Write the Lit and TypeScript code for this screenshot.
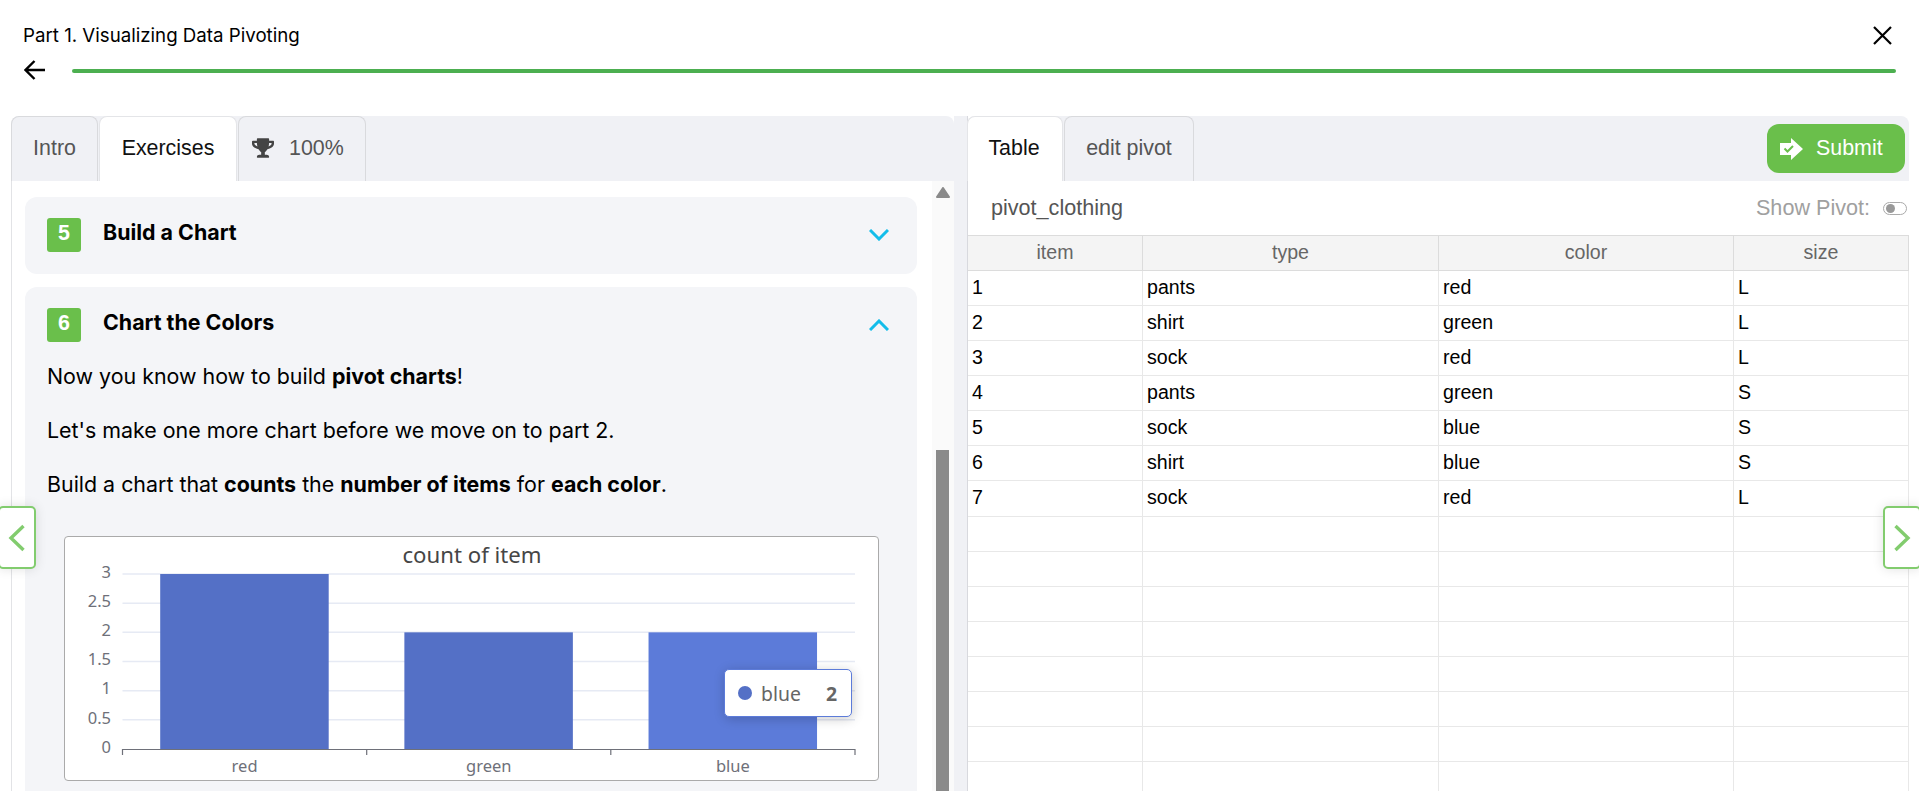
import { LitElement, css, html, svg } from 'lit'
import { customElement } from 'lit/decorators.js'

const rows = [
  ['1', 'pants', 'red', 'L'],
  ['2', 'shirt', 'green', 'L'],
  ['3', 'sock', 'red', 'L'],
  ['4', 'pants', 'green', 'S'],
  ['5', 'sock', 'blue', 'S'],
  ['6', 'shirt', 'blue', 'S'],
  ['7', 'sock', 'red', 'L'],
  ['', '', '', ''],
  ['', '', '', ''],
  ['', '', '', ''],
  ['', '', '', ''],
  ['', '', '', ''],
  ['', '', '', ''],
  ['', '', '', ''],
  ['', '', '', ''],
]

const bars = [
  { name: 'red', value: 3, color: '#5470c6' },
  { name: 'green', value: 2, color: '#5470c6' },
  { name: 'blue', value: 2, color: '#5c7bd9' },
]

const ticks = ['0', '0.5', '1', '1.5', '2', '2.5', '3']

@customElement('app-root')
export class AppRoot extends LitElement {
  static styles = css`
    :host {
      display: block;
      height: 791px;
      overflow: hidden;
      background: #fff;
      color: #000;
      font-family: 'Liberation Sans', Arial, sans-serif;
    }
    .page {
      position: relative;
      height: 791px;
      overflow: hidden;
    }
    .header {
      height: 116px;
      box-sizing: border-box;
      padding: 20px 23px 0 23px;
    }
    .title-row {
      display: flex;
      justify-content: space-between;
      align-items: center;
      height: 30px;
      font-family: Inter, sans-serif;
      font-size: 18.7px;
    }
    .close {
      width: 19px;
      height: 19px;
      margin-right: 4px;
    }
    .progress-row {
      display: flex;
      align-items: center;
      height: 40px;
    }
    .back {
      width: 21px;
      height: 20px;
      margin: 0 27px 0 1px;
    }
    .progress {
      flex: 1;
      height: 4px;
      margin-top: 2px;
      border-radius: 2px;
      background: #4caf50;
    }
    .panels {
      display: flex;
      height: 675px;
      padding: 0 10px 0 11px;
    }
    .left {
      flex: 0 0 943px;
      display: flex;
      flex-direction: column;
    }
    .splitter {
      flex: 0 0 13px;
      background: #f0f1f5;
    }
    .right {
      flex: 1;
      display: flex;
      flex-direction: column;
      min-width: 0;
      border-left: 1px solid #d8d9de;
    }
    .right .tabs {
      margin-left: -1px;
    }
    .tabs {
      flex: 0 0 65px;
      display: flex;
      gap: 1px;
      align-items: stretch;
      background: #f0f1f5;
      border-radius: 8px 8px 0 0;
    }
    .tab {
      display: flex;
      align-items: center;
      justify-content: center;
      gap: 15px;
      box-sizing: border-box;
      padding-bottom: 2px;
      border: 1px solid #d9dadd;
      border-bottom: none;
      border-radius: 8px 8px 0 0;
      color: #555;
      font-size: 21.4px;
    }
    .tab.active {
      background: #fff;
      color: #111;
      border-color: #e4e5e8;
    }
    .tab svg {
      width: 22px;
      height: 20px;
    }
    .intro { width: 87px; }
    .exercises { width: 138px; }
    .score {
      width: 128px;
      justify-content: flex-start;
      padding-left: 13px;
    }
    .table-tab {
      width: 96px;
      padding-right: 2px;
    }
    .pivot-tab { width: 130px; }
    .submit {
      display: flex;
      align-items: center;
      gap: 13px;
      box-sizing: border-box;
      width: 138px;
      height: 49px;
      margin: 8px 4px 0 auto;
      padding-left: 13px;
      border-radius: 12px;
      background: #6abf4b;
      color: #fff;
      font-size: 21.4px;
    }
    .submit svg {
      width: 23px;
      height: 22px;
    }
    .scroll-wrap {
      flex: 1;
      display: flex;
      min-height: 0;
    }
    .content {
      flex: 1;
      min-width: 0;
      box-sizing: border-box;
      padding: 16px 15px 0 13px;
      border-left: 1px solid #e2e3e6;
      overflow: hidden;
    }
    .scrollbar {
      flex: 0 0 22px;
      display: flex;
      flex-direction: column;
      box-sizing: border-box;
      padding: 6px 0 0 4px;
      background: #fafafa;
    }
    .scrollbar svg {
      width: 14px;
      height: 11px;
    }
    .thumb {
      flex: 1;
      width: 13px;
      margin-top: 252px;
      background: #8a8a8a;
    }
    .card {
      box-sizing: border-box;
      margin-bottom: 13px;
      padding: 21px 28px 40px 22px;
      border-radius: 12px;
      background: #f4f5f8;
      font-family: Inter, sans-serif;
    }
    .card.closed {
      height: 77px;
      padding-bottom: 0;
    }
    .card-head {
      display: flex;
      align-items: center;
      height: 34px;
    }
    .badge {
      display: flex;
      align-items: center;
      justify-content: center;
      width: 34px;
      height: 34px;
      margin-right: 22px;
      padding-bottom: 4px;
      box-sizing: border-box;
      border-radius: 3px;
      background: #6abf4b;
      color: #fff;
      font-family: 'Liberation Sans', Arial, sans-serif;
      font-size: 21.4px;
      font-weight: 700;
    }
    .card-title {
      flex: 1;
      padding-bottom: 6px;
      font-size: 21.4px;
      font-weight: 700;
    }
    .chev {
      width: 20px;
      height: 12px;
    }
    .card p {
      margin: 0 0 24px;
      font-size: 21.4px;
      line-height: 30px;
    }
    .card p:first-of-type {
      margin-top: 19px;
    }
    .chart {
      position: relative;
      box-sizing: border-box;
      width: 815px;
      height: 245px;
      margin: 37px 0 0 17px;
      border: 1px solid #aaa;
      border-radius: 4px;
      background: #fff;
    }
    .chart svg {
      display: block;
      width: 813px;
      height: 243px;
    }
    .chart text {
      font-family: 'Noto Sans', sans-serif;
    }
    .tooltip {
      position: absolute;
      left: 659px;
      top: 132px;
      display: flex;
      align-items: center;
      box-sizing: border-box;
      width: 128px;
      height: 48px;
      padding: 0 14px 0 13px;
      border: 1px solid #5c7bd9;
      border-radius: 5px;
      background: #fff;
      box-shadow: 1px 2px 12px rgba(0, 0, 0, 0.2);
      color: #666;
      font-family: 'Noto Sans', sans-serif;
      font-size: 19.4px;
    }
    .dot {
      width: 14px;
      height: 14px;
      margin-right: 9px;
      border-radius: 50%;
      background: #5470c6;
    }
    .tooltip b {
      margin-left: auto;
    }
    .table-head {
      flex: 0 0 54px;
      display: flex;
      align-items: center;
      justify-content: space-between;
      box-sizing: border-box;
      padding: 0 2px 0 23px;
      color: #555;
      font-size: 21.6px;
    }
    .show-pivot {
      display: flex;
      align-items: center;
      gap: 13px;
      color: #a0a0a0;
    }
    .toggle {
      display: flex;
      align-items: center;
      box-sizing: border-box;
      width: 24px;
      height: 13px;
      padding-left: 2px;
      border: 1px solid #aaa;
      border-radius: 7px;
    }
    .toggle span {
      width: 9px;
      height: 9px;
      border-radius: 50%;
      background: #999;
    }
    .grid {
      display: grid;
      grid-template-columns: 175px 296px 295px 175px;
      grid-auto-rows: 35.07px;
      font-size: 19.6px;
      border-top: 1px solid #dcdcdc;
      width: 941px;
    }
    .cell {
      box-sizing: border-box;
      padding: 0 4px;
      border-right: 1px solid #e8e8e8;
      border-bottom: 1px solid #e8e8e8;
      line-height: 32px;
      white-space: nowrap;
    }
    .cell.th {
      background: #f4f4f4;
      border-color: #dcdcdc;
      color: #666;
      line-height: 33px;
      text-align: center;
    }
    .nav {
      position: absolute;
      top: 506px;
      display: flex;
      align-items: center;
      justify-content: center;
      box-sizing: border-box;
      width: 38px;
      height: 63px;
      border: 2px solid #82cc6e;
      border-radius: 5px;
      background: #fff;
      box-shadow: 0 0 12px rgba(0, 0, 0, 0.12);
    }
    .nav svg {
      width: 18px;
      height: 28px;
    }
    .nav.prev {
      left: -2px;
    }
    .nav.next {
      left: 1883px;
    }
  `

  renderChart() {
    const left = 57.5
    const bottom = 212
    const step = 29.17
    const cat = 244.17
    return html`
      <svg viewBox="0 0 813 243">
        <text x="407" y="25.5" text-anchor="middle" font-size="22.2" fill="#464646">count of item</text>
        ${ticks.map((t, i) => svg`
          ${i > 0 ? svg`<line x1=${left} x2="790" y1=${bottom - i * step} y2=${bottom - i * step} stroke="#e6eaf4" stroke-width="1.5"></line>` : ''}
          <text x="46" y=${bottom - i * step + 3.7} text-anchor="end" font-size="16.5" fill="#6e7079">${t}</text>
        `)}
        ${bars.map((b, i) => svg`
          <rect x=${left + cat * i + 37.7} y=${bottom - b.value * 58.33} width="168.5" height=${b.value * 58.33} fill=${b.color}></rect>
          <text x=${left + cat * (i + 0.5)} y="235" text-anchor="middle" font-size="16.5" fill="#6e7079">${b.name}</text>
        `)}
        <path d="M57.5 218V212.5H790V218M301.7 212.5V218M545.8 212.5V218" fill="none" stroke="#6e7079" stroke-width="1.2"></path>
      </svg>
      <div class="tooltip"><span class="dot"></span>blue<b>2</b></div>
    `
  }

  render() {
    return html`
      <div class="page">
        <div class="header">
          <div class="title-row">
            <span>Part 1. Visualizing Data Pivoting</span>
            <svg class="close" viewBox="0 0 19 19"><path d="M1 1L18 18M18 1L1 18" fill="none" stroke="#000" stroke-width="2.2"></path></svg>
          </div>
          <div class="progress-row">
            <svg class="back" viewBox="0 0 21 20"><path d="M21 10H2M10.5 1L1.5 10L10.5 19" fill="none" stroke="#000" stroke-width="2.4"></path></svg>
            <div class="progress"></div>
          </div>
        </div>

        <div class="panels">
          <div class="left">
            <div class="tabs">
              <div class="tab intro">Intro</div>
              <div class="tab active exercises">Exercises</div>
              <div class="tab score">
                <svg viewBox="0 0 576 512"><path fill="#444" d="M552 64H448V24c0-13.3-10.7-24-24-24H152c-13.3 0-24 10.7-24 24v40H24C10.7 64 0 74.7 0 88v56c0 35.7 22.5 72.4 61.9 100.7 31.5 22.7 69.8 37.1 110 41.7C203.3 338.5 240 360 240 360v72h-48c-35.3 0-64 20.7-64 56v12c0 6.6 5.4 12 12 12h296c6.6 0 12-5.4 12-12v-12c0-35.3-28.7-56-64-56h-48v-72s36.7-21.5 68.1-73.6c40.3-4.6 78.7-19 110-41.7 39.3-28.3 61.9-65 61.9-100.7V88c0-13.3-10.7-24-24-24zM99.3 192.8C74.9 175.2 64 155.6 64 144v-16h64.2c1 32.6 5.8 61.2 12.8 86.2-15.1-5.2-29.2-12.4-41.7-21.4zM512 144c0 16.1-17.7 36.1-35.3 48.8-12.5 9-26.7 16.2-41.8 21.4 7-25 11.8-53.6 12.8-86.2H512v16z"></path></svg>
                100%
              </div>
            </div>
            <div class="scroll-wrap">
              <div class="content">
                <div class="card closed">
                  <div class="card-head">
                    <span class="badge">5</span>
                    <span class="card-title">Build a Chart</span>
                    <svg class="chev" viewBox="0 0 20 12"><path d="M1 1L10 10L19 1" fill="none" stroke="#13bdea" stroke-width="3"></path></svg>
                  </div>
                </div>
                <div class="card">
                  <div class="card-head">
                    <span class="badge">6</span>
                    <span class="card-title">Chart the Colors</span>
                    <svg class="chev" viewBox="0 0 20 12"><path d="M1 11L10 2L19 11" fill="none" stroke="#13bdea" stroke-width="3"></path></svg>
                  </div>
                  <p>Now you know how to build <b>pivot charts</b>!</p>
                  <p>Let's make one more chart before we move on to part 2.</p>
                  <p>Build a chart that <b>counts</b> the <b>number of items</b> for <b>each color</b>.</p>
                  <div class="chart">${this.renderChart()}</div>
                </div>
              </div>
              <div class="scrollbar">
                <svg viewBox="0 0 14 11"><path d="M7 1L13 10H1Z" fill="#8a8a8a" stroke="#8a8a8a" stroke-width="2" stroke-linejoin="round"></path></svg>
                <div class="thumb"></div>
              </div>
            </div>
          </div>

          <div class="splitter"></div>

          <div class="right">
            <div class="tabs">
              <div class="tab active table-tab">Table</div>
              <div class="tab pivot-tab">edit pivot</div>
              <div class="submit">
                <svg viewBox="0 0 23 22">
                  <path d="M0 5H11V0L23 11L11 22V17H0Z" fill="#fff"></path>
                  <path d="M4.5 10.5L7.5 13.5L13 8" fill="none" stroke="#6abf4b" stroke-width="2"></path>
                </svg>
                Submit
              </div>
            </div>
            <div class="table-head">
              <span>pivot_clothing</span>
              <span class="show-pivot">Show Pivot: <span class="toggle"><span></span></span></span>
            </div>
            <div class="grid">
              ${['item', 'type', 'color', 'size'].map((h) => html`<div class="cell th">${h}</div>`)}
              ${rows.map((r) => r.map((c) => html`<div class="cell">${c}</div>`))}
            </div>
          </div>
        </div>

        <div class="nav prev">
          <svg viewBox="0 0 18 28"><path d="M15.5 2L3 14L15.5 26" fill="none" stroke="#82cc6e" stroke-width="3.4"></path></svg>
        </div>
        <div class="nav next">
          <svg viewBox="0 0 18 28"><path d="M2.5 2L15 14L2.5 26" fill="none" stroke="#82cc6e" stroke-width="3.4"></path></svg>
        </div>
      </div>
    `
  }
}
